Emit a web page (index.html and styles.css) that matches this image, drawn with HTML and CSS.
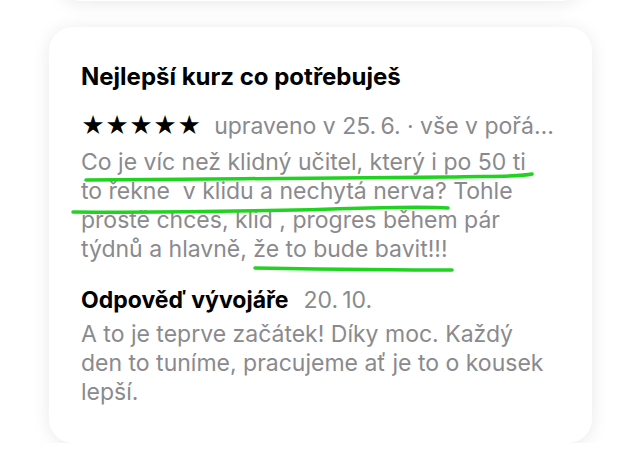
FILE: index.html
```html
<!DOCTYPE html>
<html lang="cs">
<head>
    <meta charset="UTF-8">
    <title>Recenze</title>
    <meta name="viewport" content="width=device-width, initial-scale=1">
    <link rel="stylesheet" href="styles.css">
</head>
<body>
    <div class="card card-prev"></div>

    <div class="card review">
        <h2 class="review-title">Nejlepší kurz co potřebuješ</h2>
        <div class="review-meta">
            <span class="stars">★★★★★</span>
            <span class="meta-text">upraveno v 25.&#8239;6. · vše v pořá…</span>
        </div>
        <p class="review-body">
            Co je víc než klidný učitel, který i po 50 ti<br>
            to řekne&nbsp; v klidu a nechytá nerva? Tohle<br>
            prostě chceš, klid , progres během pár<br>
            týdnů a hlavně, že to bude bavit!!!
        </p>

        <div class="reply-head">
            <span class="reply-title">Odpověď vývojáře</span>
            <span class="reply-date">20.&#8239;10.</span>
        </div>
        <p class="reply-body">
            A to je teprve začátek! Díky moc. Každý<br>
            den to tuníme, pracujeme ať je to o kousek<br>
            lepší.
        </p>

        <!-- green highlighter marks over the review text -->
        <svg class="marks" viewBox="0 0 543 416" preserveAspectRatio="none">
            <path d="M37 153 C150 152 300 151 400 150 C440 149 470 150 483 147" />
            <path d="M24 185 C120 186 220 184 320 181 C360 180 385 180 399 181" />
            <path d="M206 241 C270 242 340 243 403 243" />
        </svg>
    </div>
</body>
</html>
```

FILE: styles.css
```css
body {
    margin: 0;
    padding: 0;
    background: #fff;
    font-family: Inter, "Noto Sans", sans-serif;
}

.card {
    background: #fff;
    border-radius: 24px;
    box-shadow: 0 2px 18px rgba(0,0,0,0.09);
}

.card-prev {
    height: 41px;
    margin: -40px 58px 0 60px;
}

.review {
    position: relative;
    margin: 26px 48px 0 49px;
    height: 416px;
    box-sizing: border-box;
    padding: 35px 32px 0 32px;
}

.review-title {
    margin: 0;
    font-size: 24px;
    line-height: 30px;
    font-weight: 700;
    color: #000;
}

.review-meta {
    display: flex;
    align-items: center;
    gap: 13px;
    height: 28px;
    margin-top: 20px;
    white-space: nowrap;
    overflow: hidden;
}

.stars {
    font-size: 23px;
    letter-spacing: 0;
    color: #000;
}

.meta-text {
    font-size: 23px;
    color: #8a8a8e;
    overflow: hidden;
    text-overflow: ellipsis;
}

.review-body,
.reply-body {
    margin: 8px 0 0;
    font-size: 23px;
    line-height: 29px;
    color: #8a8a8e;
}

.reply-head {
    display: flex;
    align-items: baseline;
    gap: 15px;
    height: 28px;
    margin-top: 22px;
}

.reply-title {
    font-size: 23px;
    font-weight: 700;
    color: #000;
}

.reply-date {
    font-size: 23px;
    color: #8a8a8e;
}

.reply-body {
    margin-top: 6px;
}

.marks {
    position: absolute;
    inset: 0;
    width: 100%;
    height: 100%;
    pointer-events: none;
}

.marks path {
    fill: none;
    stroke: #1fd41f;
    stroke-width: 3.5;
    stroke-linecap: round;
}
```
